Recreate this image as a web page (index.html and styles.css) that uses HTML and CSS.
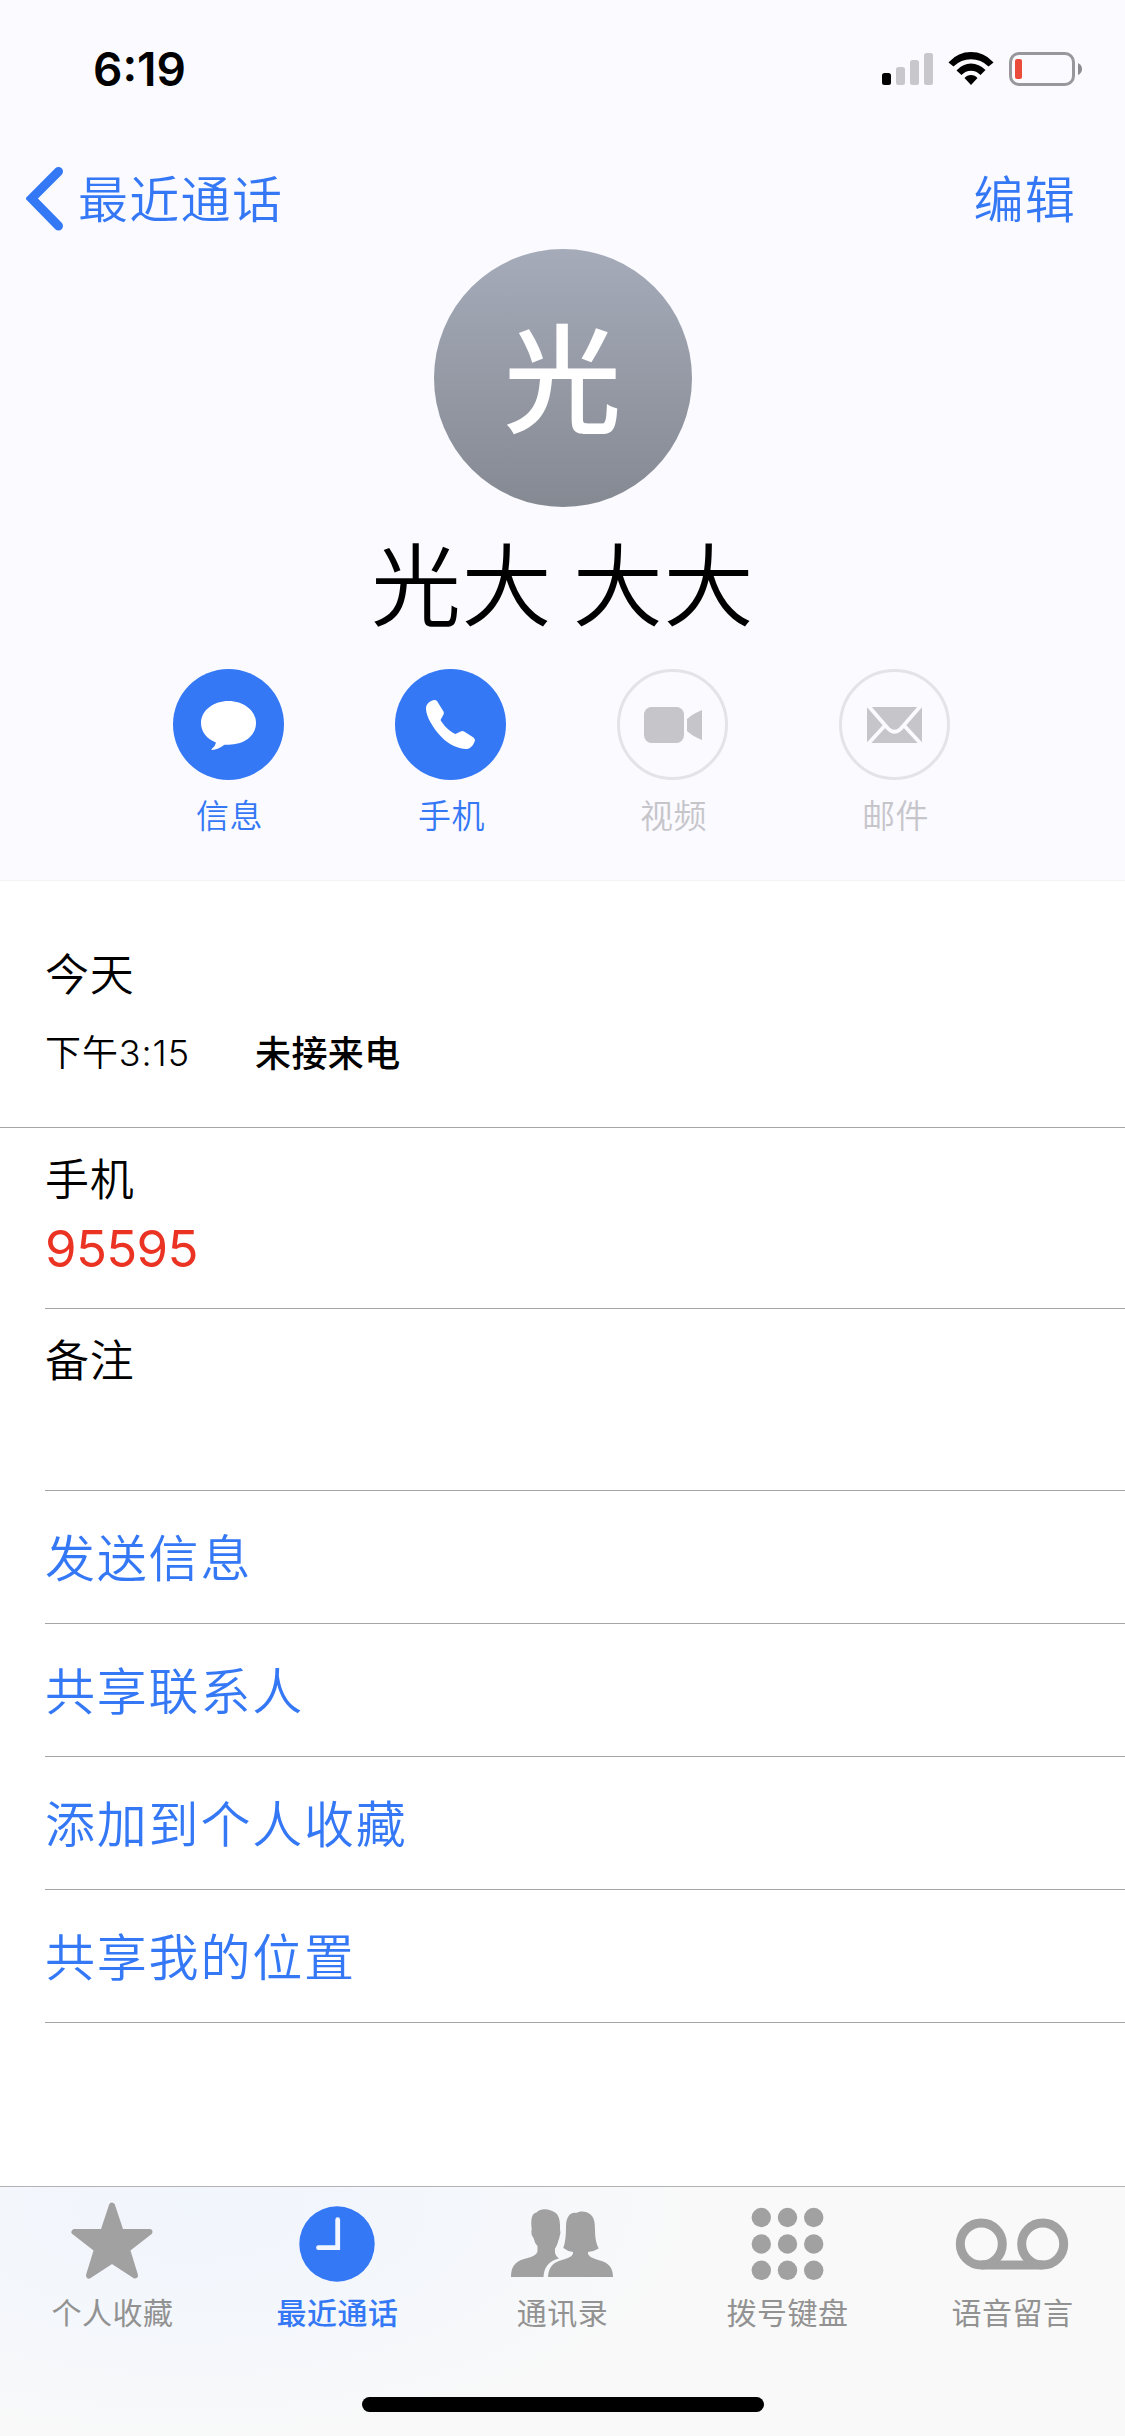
FILE: index.html
```html
<!DOCTYPE html>
<html lang="zh-CN">
<head>
<meta charset="utf-8">
<title>光大 大大</title>
<link rel="stylesheet" href="styles.css">
</head>
<body>
<div class="screen">
  <header class="header">
    <div class="status">
      <span class="time">6:19</span>
      <svg class="status-icons" width="202" height="36" viewBox="0 0 202 36">
        <g fill="#c7c7cc">
          <rect x="14" y="15" width="9" height="18" rx="2.5"/>
          <rect x="28" y="8" width="9" height="25" rx="2.5"/>
          <rect x="42" y="1" width="9" height="32" rx="2.5"/>
        </g>
        <rect x="0" y="21" width="9" height="12" rx="2.5" fill="#000"/>
        <path d="M67.5 9.5Q76 0 89 0Q102 0 110.500 9.500L111.500 10.500L106.500 14.500Q99 7.300 89 7.300Q79 7.300 71.500 14.500L66.500 10.500ZM75 18Q81 11.500 89 11.500Q97 11.500 103.500 18L98.500 23Q94.500 18.700 89 18.700Q83.500 18.700 79.500 23L74.500 18.500ZM82.500 26Q85 23 89 23Q93 23 95.500 26L89 33Z"/>
        <rect x="128.500" y="1.500" width="63" height="31" rx="8.500" fill="none" stroke="#98989c" stroke-width="3"/>
        <rect x="133" y="7" width="7" height="20" rx="2" fill="#ea4b3b"/>
        <path d="M196 11Q200 13 200 17Q200 21 196 23Z" fill="#8c8c90"/>
      </svg>
    </div>
    <nav class="nav">
      <a class="back">
        <svg width="38" height="64" viewBox="0 0 38 64"><path d="M32.500 4.500L5.500 31.500L32.500 59" fill="none" stroke="#3478f6" stroke-width="9" stroke-linecap="round"/></svg>
        <span class="nav-text">最近通话</span>
      </a>
      <a class="nav-text">编辑</a>
    </nav>
    <div class="avatar">光</div>
    <h1 class="name">光大 大大</h1>
    <div class="actions">
      <div class="action">
        <svg width="111" height="111" viewBox="0 0 111 111"><circle cx="55.500" cy="55.500" r="55.500" fill="#3478f6"/><path d="M55.500 32C70 32 83 41 83 54C83 67.500 70 75.700 55.500 75.700Q52 75.700 51.500 75.700Q45 80.500 39 81Q38 81 38.700 80Q42.500 77 43 73.500C34 70 28 63 28 54C28 41 41 32 55.500 32Z" fill="#fff"/></svg>
        <span>信息</span>
      </div>
      <div class="action">
        <svg width="111" height="111" viewBox="0 0 111 111"><circle cx="55.500" cy="55.500" r="55.500" fill="#3478f6"/><path d="M31 39.500C31 35 35 31.500 39.500 31Q41 31 42 32L48.500 42.500Q49.300 44 48.500 45.500L45.500 51C49 57 54.500 62.500 60.500 65L65.500 62.500Q67.500 61.500 69.500 62.700L78.500 68.500Q80.500 70 79.800 72C78.500 76.500 75 79.700 72 80C66 80.500 54 76.500 46 67.500C38 59 31 47.500 31 39.500Z" fill="#fff"/></svg>
        <span>手机</span>
      </div>
      <div class="action off">
        <svg width="111" height="111" viewBox="0 0 111 111"><circle cx="55.500" cy="55.500" r="54" fill="none" stroke="#e3e3e8" stroke-width="3"/><rect x="27" y="38" width="40" height="36" rx="7.500" fill="#c6c5ca"/><path d="M70 50Q76 44.500 85 41V71Q76 67.500 70 62Z" fill="#c6c5ca"/></svg>
        <span>视频</span>
      </div>
      <div class="action off">
        <svg width="111" height="111" viewBox="0 0 111 111"><circle cx="55.500" cy="55.500" r="54" fill="none" stroke="#e3e3e8" stroke-width="3"/><path d="M28 38H83V74H28Z" fill="#c6c5ca"/><path d="M29 36.500L49 59.500Q55.500 66 62 59.500L82 36.500M28 76L45.500 57M83 76L65.500 57" fill="none" stroke="#fafaff" stroke-width="3.800"/></svg>
        <span>邮件</span>
      </div>
    </div>
  </header>
  <main>
    <section class="recent">
      <h2 class="label">今天</h2>
      <div class="call"><span class="call-time">下午3:15</span><strong>未接来电</strong></div>
    </section>
    <section class="field">
      <div class="label">手机</div>
      <div class="number">95595</div>
    </section>
    <section class="field notes">
      <div class="label">备注</div>
    </section>
    <ul class="links">
      <li>发送信息</li>
      <li>共享联系人</li>
      <li>添加到个人收藏</li>
      <li>共享我的位置</li>
    </ul>
  </main>
  <footer class="tabbar">
    <div class="tabs">
      <div class="tab">
        <svg width="120" height="90" viewBox="0 0 120 90"><path d="M60 5.500L68.800 32H97.500L75 49.500L83 75.500L60 60.500L37 75.500L45 49.500L22.500 32H51.200Z" fill="#a1a1a1" stroke="#a1a1a1" stroke-width="6" stroke-linejoin="round"/></svg>
        <span>个人收藏</span>
      </div>
      <div class="tab active">
        <svg width="120" height="90" viewBox="0 0 120 90"><circle cx="60" cy="44" r="37.700" fill="#3478f6"/><path d="M60.700 19.700V47.700H41.500" fill="none" stroke="#f3f7fd" stroke-width="4.800" stroke-linecap="round"/></svg>
        <span>最近通话</span>
      </div>
      <div class="tab">
        <svg width="120" height="90" viewBox="0 0 120 90"><g fill="#a1a1a1"><path d="M9 77C9 67 13 61.500 22 59C30 57 35 55 35.500 51V46Q32.500 43 31.500 38Q29 35 29.300 31Q30 29.500 29.700 29C28.500 19 30 13 34.500 12.500C38 8.500 44 8.500 49 10.500C56 12.500 58.500 18 58 29Q59 32 57.500 37Q57 39.500 56.500 40Q55 46 53 48.500V53Q54 57 57 58.500C47 61 42 67 41.500 77Z"/><path d="M46 77C46.500 67.500 51 62 60 60C67 58 70.500 56.500 71 53V52Q65 51 61.300 48Q64 41 64 27C64 17 68 12 74 13C78 10.500 85 11 88.500 14.500C92 17.500 93 22 93 30Q93 42 96.700 48.500Q92 51.500 86 52V53.500C87 57 91 58.500 98 60.500C107 63 111 68 111 77Z"/></g></svg>
        <span>通讯录</span>
      </div>
      <div class="tab">
        <svg width="120" height="90" viewBox="0 0 120 90"><g fill="#a1a1a1"><circle cx="34.300" cy="17.500" r="9.700"/><circle cx="60.500" cy="17.500" r="9.700"/><circle cx="86.700" cy="17.500" r="9.700"/><circle cx="34.300" cy="44" r="9.700"/><circle cx="60.500" cy="44" r="9.700"/><circle cx="86.700" cy="44" r="9.700"/><circle cx="34.300" cy="70.300" r="9.700"/><circle cx="60.500" cy="70.300" r="9.700"/><circle cx="86.700" cy="70.300" r="9.700"/></g></svg>
        <span>拨号键盘</span>
      </div>
      <div class="tab">
        <svg width="120" height="90" viewBox="0 0 120 90"><g fill="none" stroke="#a1a1a1" stroke-width="9"><circle cx="29.300" cy="44" r="21"/><circle cx="90.700" cy="44" r="21"/><path d="M29.300 65H90.700"/></g></svg>
        <span>语音留言</span>
      </div>
    </div>
    <div class="home"></div>
  </footer>
</div>
</body>
</html>
```
FILE: styles.css
```css
* { box-sizing: border-box; margin: 0; padding: 0; }
body { font-family: "Noto Sans CJK SC", sans-serif; background: #fff; color: #000; font-weight: 350; }
svg { display: block; flex: none; }
.screen { width: 1125px; height: 2436px; display: flex; flex-direction: column; overflow: hidden; }
.header { height: 881px; background: #fafaff; display: flex; flex-direction: column; align-items: center; border-bottom: 1px solid #f3f3f6; }
.status { width: 100%; height: 132px; padding: 46px 41px 0 93px; display: flex; justify-content: space-between; }
.status-icons { margin-top: 6px; }
.time { font: 600 46px/46px "Inter", sans-serif; letter-spacing: 0; }
.nav { width: 100%; height: 117px; display: flex; justify-content: space-between; align-items: center; padding: 16px 49px 0 26px; color: #3478f6; font-size: 50px; letter-spacing: 1.300px; line-height: 70px; }
.nav-text { padding-bottom: 6px; }
.back { display: flex; align-items: center; gap: 14px; }
.avatar { width: 258px; height: 258px; border-radius: 50%; background: linear-gradient(#a5abb9, #858992); color: #fff; font-size: 118px; font-weight: 500; line-height: 248px; text-align: center; }
.name { margin-top: 23px; font-size: 90px; font-weight: 350; line-height: 100px; letter-spacing: .6px; }
.actions { display: flex; gap: 111px; margin: 39px 2px 0 0; }
.action { width: 111px; display: flex; flex-direction: column; align-items: center; gap: 14px; color: #3478f6; font-size: 33px; line-height: 40px; letter-spacing: .6px; }
.action span { margin-left: 2px; }
.action.off { color: #c6c5ca; }
.recent { height: 247px; padding: 66px 45px 0; border-bottom: 1px solid #a5a5a7; }
.label { font-size: 44px; font-weight: 350; line-height: 50px; letter-spacing: .8px; }
.call { display: flex; margin-top: 31px; font-size: 36px; line-height: 46px; }
.call-time { width: 210px; font-family: "Inter", "Noto Sans CJK SC", sans-serif; letter-spacing: .9px; padding-top: 2px; }
.call strong { font-weight: 500; letter-spacing: .4px; }
.field { height: 181px; margin-left: 45px; padding-top: 24px; border-bottom: 1px solid #a5a5a7; }
.number { margin-top: 17px; color: #eb3323; font: 400 51px/60px "Inter", sans-serif; letter-spacing: -.7px; }
.notes { height: 182px; }
.links { list-style: none; margin-left: 45px; }
.links li { height: 133px; border-bottom: 1px solid #a5a5a7; color: #3478f6; font-size: 50px; line-height: 128px; letter-spacing: 1.800px; }
.tabbar { margin-top: auto; height: 250px; border-top: 1px solid #b2b2b4; background: radial-gradient(ellipse 520px 240px at 190px 20px, #f1f5fc 0%, rgba(242,246,252,.8) 45%, rgba(249,249,249,0) 100%) #f9f9f9; display: flex; flex-direction: column; align-items: center; }
.tabs { width: 100%; display: grid; grid-template-columns: repeat(5, 1fr); padding-top: 13px; }
.tab { display: flex; flex-direction: column; align-items: center; gap: 1px; color: #929292; font-size: 30px; line-height: 40px; letter-spacing: .5px; font-weight: 400; }
.tab svg { margin-right: 1px; }
.tab.active { color: #3478f6; font-weight: 500; }
.home { width: 402px; height: 15px; border-radius: 8px; background: #000; margin-top: 66px; }
```
